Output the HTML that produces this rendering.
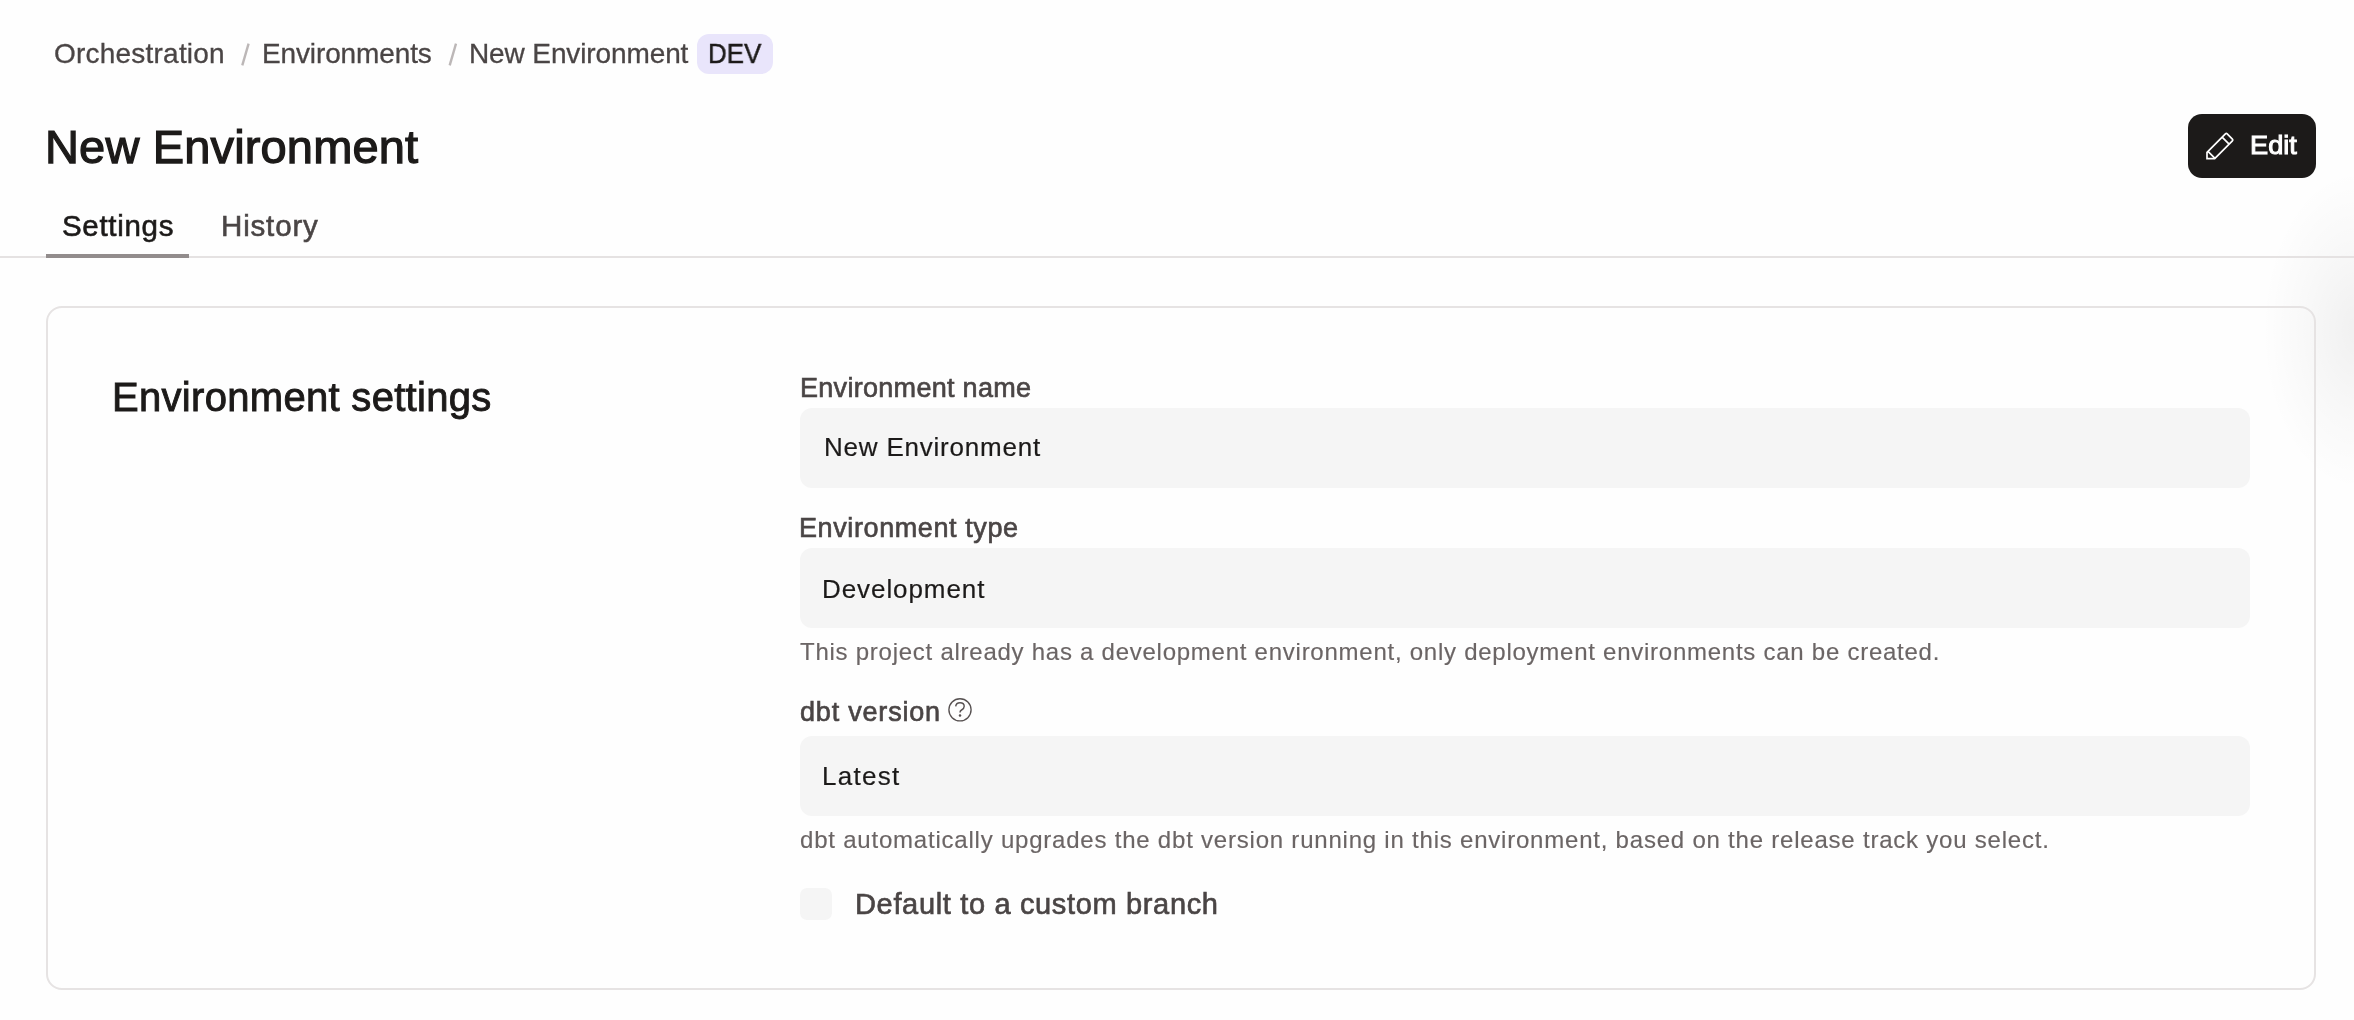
<!DOCTYPE html>
<html>
<head>
<meta charset="utf-8">
<style>
  html, body { margin:0; padding:0; }
  body {
    width:2354px; height:1020px; overflow:hidden; position:relative;
    background:#fefefe;
    font-family:"Liberation Sans", sans-serif;
  }
  .t { position:absolute; white-space:nowrap; line-height:1; margin:0; will-change:transform; }
  .badge { position:absolute; left:697px; top:34px; width:76px; height:40px; border-radius:12px; background:#e9e5fb; }
  .btn { position:absolute; left:2188px; top:114px; width:128px; height:64px; border-radius:14px; background:#1c1a19; }
  .tabline { position:absolute; left:0; top:256px; width:2354px; height:2px; background:#e5e2e2; }
  .tabul { position:absolute; left:46px; top:254px; width:143px; height:4px; background:#928c8c; }
  .card { position:absolute; left:46px; top:306px; width:2266px; height:680px; border:2px solid #e6e3e3; border-radius:16px; }
  .input { position:absolute; left:800px; width:1450px; height:80px; border-radius:12px; background:#f5f5f5; }
  .cb { position:absolute; left:800px; top:888px; width:32px; height:32px; border-radius:7px; background:#f5f5f5; }
  .shade { position:absolute; background:radial-gradient(closest-side, rgba(0,0,0,0.055), rgba(0,0,0,0.02) 60%, rgba(0,0,0,0)); }
</style>
</head>
<body>
  <div class="shade" style="left:2262px;top:170px;width:190px;height:320px;"></div>

  <div class="t" style="left:54.0px;top:39.8px;font-size:28px;letter-spacing:0.217px;color:#4a4545;-webkit-text-stroke:0.3px #4a4545;">Orchestration</div>
  <div class="t" style="left:261.7px;top:40.0px;font-size:28px;letter-spacing:-0.127px;color:#4a4545;-webkit-text-stroke:0.3px #4a4545;">Environments</div>
  <div class="t" style="left:468.5px;top:40.0px;font-size:28px;letter-spacing:-0.114px;color:#4a4545;-webkit-text-stroke:0.3px #4a4545;">New Environment</div>
  <svg style="position:absolute;left:0;top:0;" width="480" height="80">
    <line x1="242.3" y1="65.3" x2="248.6" y2="43.7" stroke="#bcb7b7" stroke-width="2.4"/>
    <line x1="449.7" y1="65.3" x2="456" y2="43.7" stroke="#bcb7b7" stroke-width="2.4"/>
  </svg>
  <div class="badge"></div>
  <div class="t" style="left:707.6px;top:40.0px;font-size:28px;letter-spacing:0.0px;color:#1c1a19;transform:scaleX(0.9251);transform-origin:0 0;-webkit-text-stroke:0.5px #1c1a19;">DEV</div>

  <div class="t" style="left:45.3px;top:122.8px;font-size:47px;letter-spacing:0.157px;color:#1c1a19;-webkit-text-stroke:1.25px #1c1a19;">New Environment</div>

  <div class="btn"></div>
  <svg style="position:absolute;left:2204px;top:130px;" width="32" height="32" viewBox="0 0 32 32">
    <g fill="none" stroke="#ffffff" stroke-width="1.7" stroke-linejoin="miter">
      <path d="M3 28.6 V22.3 L21.4 3.9 Q22.3 3 23.2 3.9 L28.4 9.1 Q29.3 10 28.4 10.9 L10.7 28.6 Z"/>
      <path d="M3.95 21.35 L10.95 28.35"/>
      <path d="M18.1 7.2 L25.1 14.2"/>
    </g>
  </svg>
  <div class="t" style="left:2249.9px;top:132.3px;font-size:26px;letter-spacing:0.0px;color:#ffffff;transform:scaleX(1.0466);transform-origin:0 0;-webkit-text-stroke:1.0px #ffffff;">Edit</div>

  <div class="t" style="left:62.1px;top:210.6px;font-size:29.5px;letter-spacing:0.686px;color:#1c1a19;-webkit-text-stroke:0.6px #1c1a19;">Settings</div>
  <div class="t" style="left:220.5px;top:210.6px;font-size:29.5px;letter-spacing:0.833px;color:#4a4545;-webkit-text-stroke:0.6px #4a4545;">History</div>
  <div class="tabline"></div>
  <div class="tabul"></div>

  <div class="card"></div>
  <div class="t" style="left:111.6px;top:376.8px;font-size:40px;letter-spacing:0.305px;color:#1c1a19;-webkit-text-stroke:0.9px #1c1a19;">Environment settings</div>

  <div class="t" style="left:799.6px;top:374.9px;font-size:27px;letter-spacing:0.293px;color:#4a4545;-webkit-text-stroke:0.65px #4a4545;">Environment name</div>
  <div class="input" style="top:408px;"></div>
  <div class="t" style="left:823.8px;top:434.2px;font-size:26px;letter-spacing:0.786px;color:#1c1a19;-webkit-text-stroke:0.2px #1c1a19;">New Environment</div>

  <div class="t" style="left:799.3px;top:515.3px;font-size:27px;letter-spacing:0.6px;color:#4a4545;-webkit-text-stroke:0.65px #4a4545;">Environment type</div>
  <div class="input" style="top:548px;"></div>
  <div class="t" style="left:822.0px;top:575.6px;font-size:26px;letter-spacing:0.92px;color:#1c1a19;-webkit-text-stroke:0.2px #1c1a19;">Development</div>
  <div class="t" style="left:800.3px;top:639.5px;font-size:24px;letter-spacing:0.745px;color:#6b6565;-webkit-text-stroke:0.15px #6b6565;">This project already has a development environment, only deployment environments can be created.</div>

  <div class="t" style="left:800.0px;top:699.0px;font-size:27px;letter-spacing:0.8px;color:#4a4545;-webkit-text-stroke:0.65px #4a4545;">dbt version</div>
  <svg style="position:absolute;left:946px;top:697px;" width="28" height="28" viewBox="0 0 28 28">
    <circle cx="14" cy="12.8" r="11.1" fill="none" stroke="#575151" stroke-width="1.35"/>
    <path d="M9.7 9.3 Q10.1 5.7 14 5.7 Q18.2 5.7 18.2 9.3 Q18.2 11.6 15.6 13 Q14 13.9 14 15.5" fill="none" stroke="#575151" stroke-width="1.45"/>
    <circle cx="14" cy="18.6" r="1.25" fill="#575151"/>
  </svg>
  <div class="input" style="top:736px;"></div>
  <div class="t" style="left:822.1px;top:763.4px;font-size:26px;letter-spacing:1.28px;color:#1c1a19;-webkit-text-stroke:0.2px #1c1a19;">Latest</div>
  <div class="t" style="left:800.0px;top:828.0px;font-size:24px;letter-spacing:0.785px;color:#6b6565;-webkit-text-stroke:0.15px #6b6565;">dbt automatically upgrades the dbt version running in this environment, based on the release track you select.</div>

  <div class="cb"></div>
  <div class="t" style="left:855.3px;top:889.8px;font-size:29px;letter-spacing:0.656px;color:#4a4545;-webkit-text-stroke:0.65px #4a4545;">Default to a custom branch</div>
</body>
</html>
